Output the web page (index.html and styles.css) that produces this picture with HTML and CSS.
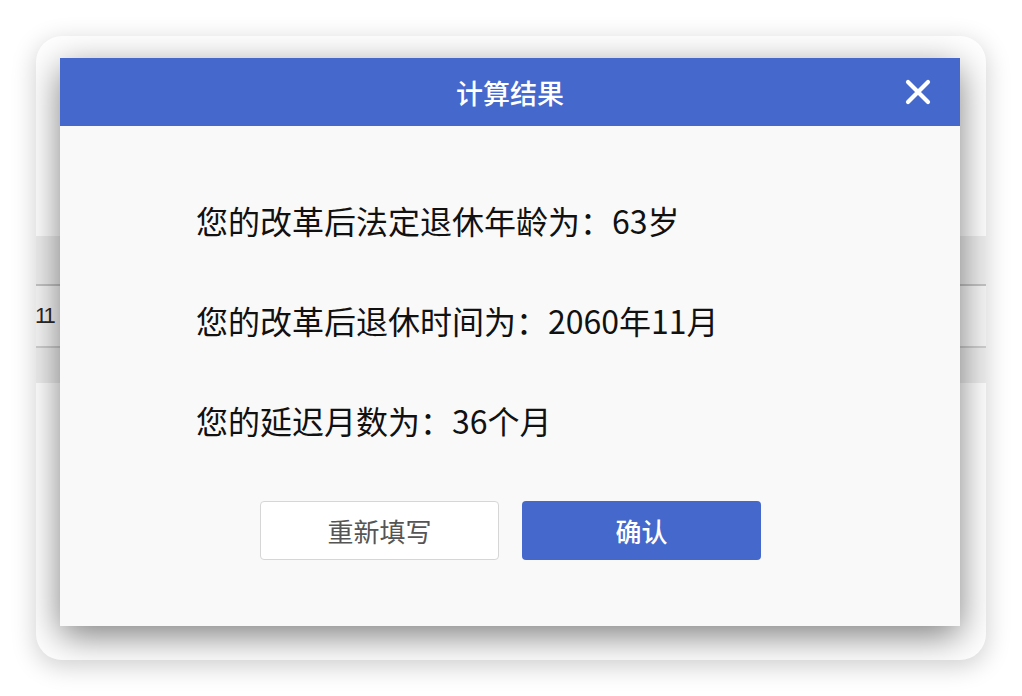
FILE: index.html
```html
<!DOCTYPE html>
<html lang="zh-CN">
<head>
<meta charset="utf-8">
<title>计算结果</title>
<link rel="stylesheet" href="styles.css">
</head>
<body>
<div class="stage">
  <div class="card">
    <div class="page">
      <div class="page-top"></div>
      <div class="band"></div>
      <div class="row"><span class="row-text">11</span></div>
      <div class="band band-small"></div>
    </div>
    <div class="dialog">
      <div class="dialog-header">
        <span class="dialog-title">计算结果</span>
        <span class="dialog-close">
          <svg width="26" height="26" viewBox="0 0 26 26"><path d="M3 3 L23 23 M23 3 L3 23" stroke="#fff" stroke-width="4.2" stroke-linecap="round" fill="none"/></svg>
        </span>
      </div>
      <div class="dialog-body">
        <p class="result-line">您的改革后法定退休年龄为：63岁</p>
        <p class="result-line">您的改革后退休时间为：2060年11月</p>
        <p class="result-line">您的延迟月数为：36个月</p>
        <div class="actions">
          <button class="btn btn-plain">重新填写</button>
          <button class="btn btn-primary">确认</button>
        </div>
      </div>
    </div>
  </div>
</div>
</body>
</html>
```

FILE: styles.css
```css
html, body {
  margin: 0;
  padding: 0;
  background: #ffffff;
}
body {
  width: 1022px;
  height: 696px;
  overflow: hidden;
  font-family: "Noto Sans CJK SC", "Noto Sans", sans-serif;
}
.stage {
  padding: 36px;
}
.card {
  position: relative;
  width: 950px;
  height: 624px;
  border-radius: 26px;
  overflow: hidden;
  background: #ffffff;
  box-shadow: 0 6px 26px rgba(0, 0, 0, 0.2);
}
.page {
  display: flex;
  flex-direction: column;
}
.page-top {
  height: 200px;
}
.band {
  height: 48px;
  background: #eeeeee;
  border-bottom: 2px solid #c4c4c4;
}
.band-small {
  height: 35px;
  border-bottom: none;
}
.row {
  height: 60px;
  background: #f6f6f6;
  border-bottom: 2px solid #cfcfcf;
  display: flex;
  align-items: center;
}
.row-text {
  font-family: "Liberation Sans", "Noto Sans CJK SC", sans-serif;
  font-size: 22px;
  letter-spacing: -2px;
  color: #2a2a2a;
  margin-left: -1px;
}
.dialog {
  position: absolute;
  left: 24px;
  top: 22px;
  width: 900px;
  height: 568px;
  background: #f9f9f9;
  box-shadow: 0 10px 34px rgba(0, 0, 0, 0.5);
  display: flex;
  flex-direction: column;
}
.dialog-header {
  height: 68px;
  background: #4468cc;
  display: flex;
  align-items: center;
  justify-content: center;
  position: relative;
}
.dialog-title {
  color: #ffffff;
  font-size: 27px;
  font-weight: 500;
}
.dialog-close {
  position: absolute;
  right: 29px;
  top: 21px;
  width: 26px;
  height: 26px;
  display: flex;
}
.dialog-body {
  padding: 44px 0 0 136px;
  display: flex;
  flex-direction: column;
}
.result-line {
  margin: 0;
  height: 100px;
  line-height: 100px;
  font-size: 32px;
  color: #111111;
}
.actions {
  margin-top: 31px;
  margin-left: 64px;
  display: flex;
  gap: 23px;
}
.btn {
  width: 239px;
  height: 59px;
  border-radius: 4px;
  font-family: "Noto Sans CJK SC", "Noto Sans", sans-serif;
  font-size: 26px;
  padding: 0;
  cursor: pointer;
}
.btn-plain {
  background: #ffffff;
  border: 1.5px solid #d6d6d6;
  color: #555555;
}
.btn-primary {
  background: #4468cc;
  border: none;
  color: #ffffff;
  font-weight: 500;
}
```
